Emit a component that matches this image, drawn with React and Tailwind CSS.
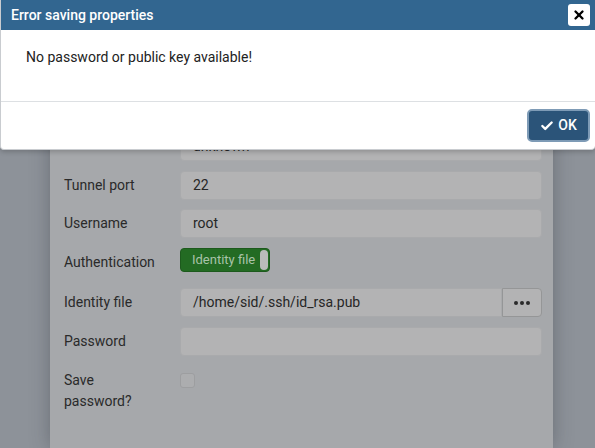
import { Check, X } from 'lucide-react';

const Field = ({ children, className = '' }) => (
  <div
    className={`h-[29px] flex items-center rounded-[4px] border border-[#a9aaac] bg-[#b3b3b4] px-3 text-[14px] text-[#262626] ${className}`}
  >
    {children}
  </div>
);

const Row = ({ label, children, className = '' }) => (
  <div className={`flex items-center ${className}`}>
    <div className="w-[116px] text-[14px] text-[#2a2a2a]">{label}</div>
    <div className="flex-1">{children}</div>
  </div>
);

export default function App() {
  return (
    <div className="relative w-[595px] h-[448px] overflow-hidden bg-[#8d9299] font-['Roboto',sans-serif]">
      {/* Dimmed properties dialog behind */}
      <div className="flex h-full">
        <div className="w-[50px]" />
        <div className="w-[503px] h-full bg-[#a6a8ab] pl-[14px] pr-[11px] pt-[132px] shadow-[0_0_18px_rgba(40,44,52,0.35)]">
          <Row label="">
            <Field>unknown</Field>
          </Row>
          <Row label="Tunnel port" className="mt-[10px]">
            <Field>22</Field>
          </Row>
          <Row label="Username" className="mt-[9px]">
            <Field>root</Field>
          </Row>
          <div className="flex items-center mt-[9px]">
            <div className="w-[116px] text-[14px] text-[#2a2a2a] pt-[5px]">Authentication</div>
            <div className="h-[24px] w-[90px] rounded-[4px] border border-[#1d5a1d] bg-[#236b23] flex items-center justify-between pl-[11px] pr-[1px]">
              <span className="text-[13px] text-[#a9c3a9]">Identity file</span>
              <span className="h-[20px] w-[8px] rounded-[4px] bg-[#b9bbb9]" />
            </div>
          </div>
          <Row label="Identity file" className="mt-[15px]">
            <div className="flex h-[29px]">
              <div className="flex-1 flex items-center rounded-l-[4px] border border-[#a9aaac] bg-[#b3b3b4] px-3 text-[14px] text-[#262626]">
                /home/sid/.ssh/id_rsa.pub
              </div>
              <div className="w-[40px] flex items-center justify-center gap-[2px] rounded-r-[4px] border border-[#959697] bg-[#b3b3b4]">
                <span className="h-[4px] w-[4px] rounded-full bg-[#2a2a2a]" />
                <span className="h-[4px] w-[4px] rounded-full bg-[#2a2a2a]" />
                <span className="h-[4px] w-[4px] rounded-full bg-[#2a2a2a]" />
              </div>
            </div>
          </Row>
          <Row label="Password" className="mt-[10px]">
            <Field />
          </Row>
          <div className="flex items-start mt-[14px]">
            <div className="w-[116px] text-[14px] leading-[21px] text-[#2a2a2a]">
              Save
              <br />
              password?
            </div>
            <div className="mt-[3px] h-[15px] w-[15px] rounded-[3px] border border-[#9d9ea0] bg-[#acadaf]" />
          </div>
        </div>
      </div>

      {/* Error modal */}
      <div className="absolute top-0 left-0 w-[595px] h-[150px] flex flex-col bg-white border-l border-b border-[#c9ccd0] rounded-b-[4px] shadow-[0_2px_5px_rgba(0,0,0,0.2)]">
        <div className="h-[30px] bg-[#326690] flex items-center justify-between pl-[10px] pr-[5px]">
          <span className="text-[14px] font-medium text-white">Error saving properties</span>
          <button className="h-[22px] w-[22px] rounded-[3px] bg-white flex items-center justify-center">
            <X size={14} strokeWidth={4} className="text-black" />
          </button>
        </div>
        <div className="h-[72px] border-b border-[#dde0e3] pl-[25px] pt-[17px] text-[14px] text-[#222222]">
          No password or public key available!
        </div>
        <div className="flex-1 flex items-center justify-end pr-[5px]">
          <button className="h-[33px] w-[63px] rounded-[5px] bg-[#2b5479] border-[2px] border-[#7e9bb6] flex items-center justify-center gap-[4px] text-white text-[14px] font-medium">
            <Check size={14} strokeWidth={4} />
            OK
          </button>
        </div>
      </div>
    </div>
  );
}
